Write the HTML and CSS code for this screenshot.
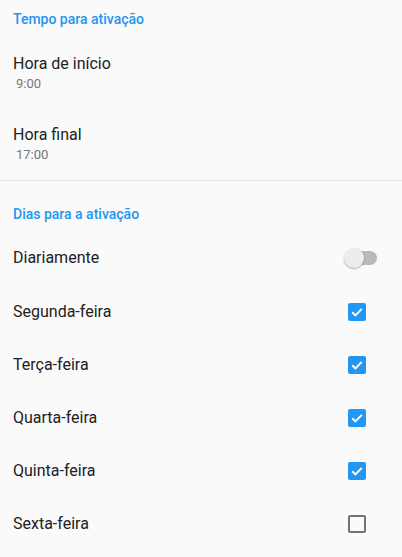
FILE: index.html
```html
<!DOCTYPE html>
<html lang="pt">
<head>
<meta charset="utf-8">
<link rel="stylesheet" href="styles.css">
</head>
<body>
<div class="screen">
  <div class="category first">Tempo para ativação</div>
  <div class="pref two-line">
    <div class="pref-title">Hora de início</div>
    <div class="pref-summary">9:00</div>
  </div>
  <div class="pref two-line">
    <div class="pref-title">Hora final</div>
    <div class="pref-summary">17:00</div>
  </div>
  <div class="divider"></div>
  <div class="category second">Dias para a ativação</div>
  <div class="pref row switch-row">
    <div class="pref-title">Diariamente</div>
    <div class="switch"><span class="track"></span><span class="thumb"></span></div>
  </div>
  <div class="pref row">
    <div class="pref-title">Segunda-feira</div>
    <div class="checkbox checked"><svg viewBox="0 0 18 18" width="18" height="18"><path d="M4.2 9.3 L7.4 12.4 L13.8 5.9" fill="none" stroke="#fff" stroke-width="2"/></svg></div>
  </div>
  <div class="pref row">
    <div class="pref-title">Terça-feira</div>
    <div class="checkbox checked"><svg viewBox="0 0 18 18" width="18" height="18"><path d="M4.2 9.3 L7.4 12.4 L13.8 5.9" fill="none" stroke="#fff" stroke-width="2"/></svg></div>
  </div>
  <div class="pref row">
    <div class="pref-title">Quarta-feira</div>
    <div class="checkbox checked"><svg viewBox="0 0 18 18" width="18" height="18"><path d="M4.2 9.3 L7.4 12.4 L13.8 5.9" fill="none" stroke="#fff" stroke-width="2"/></svg></div>
  </div>
  <div class="pref row">
    <div class="pref-title">Quinta-feira</div>
    <div class="checkbox checked"><svg viewBox="0 0 18 18" width="18" height="18"><path d="M4.2 9.3 L7.4 12.4 L13.8 5.9" fill="none" stroke="#fff" stroke-width="2"/></svg></div>
  </div>
  <div class="pref row">
    <div class="pref-title">Sexta-feira</div>
    <div class="checkbox"></div>
  </div>
</div>
</body>
</html>
```
FILE: styles.css
```css
html, body {
  margin: 0;
  padding: 0;
  background: #fafafa;
}
body {
  font-family: Roboto, "Noto Sans", sans-serif;
  color: #212121;
}
.screen {
  width: 402px;
  height: 557px;
  overflow: hidden;
  background: #fafafa;
}
.category {
  font-size: 14px;
  font-weight: 500;
  line-height: 16px;
  color: #2196f3;
  padding-left: 13px;
}
.category.first {
  padding-top: 11px;
  padding-bottom: 11px;
}
.category.second {
  padding-top: 25px;
  padding-bottom: 9px;
}
.pref {
  padding-left: 13px;
}
.pref-title {
  font-size: 16px;
  line-height: 20px;
  color: #212121;
}
.two-line {
  height: 71px;
  box-sizing: border-box;
  padding-top: 16px;
}
.pref-summary {
  font-size: 13px;
  line-height: 19px;
  color: #757575;
  padding-left: 3px;
}
.divider {
  height: 1px;
  background: #e3e3e3;
}
.row {
  height: 53px;
  display: flex;
  align-items: center;
  justify-content: space-between;
  padding-right: 36px;
}
.switch-row {
  height: 54px;
  padding-bottom: 1px;
  box-sizing: border-box;
}
.checkbox {
  width: 18px;
  height: 18px;
  box-sizing: border-box;
  border: 2px solid #737373;
  border-radius: 2px;
}
.checkbox.checked {
  border: none;
  background: #2196f3;
}
.checkbox svg {
  display: block;
}
.switch {
  position: relative;
  width: 33px;
  height: 20px;
  margin-right: -11px;
}
.track {
  position: absolute;
  left: 2px;
  top: 3px;
  width: 31px;
  height: 14px;
  border-radius: 7px;
  background: #b9b9b9;
}
.thumb {
  position: absolute;
  left: 0;
  top: 0;
  width: 20px;
  height: 20px;
  border-radius: 50%;
  background: #ededed;
  box-shadow: 0 1px 2px rgba(0,0,0,0.3);
}
```
